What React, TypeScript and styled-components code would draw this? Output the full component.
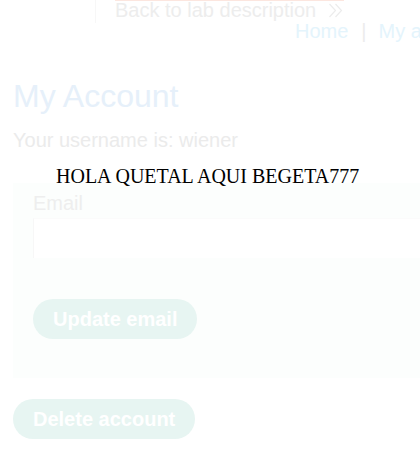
import React from "react";
import styled, { createGlobalStyle } from "styled-components";

const Global = createGlobalStyle`
  html, body { margin: 0; padding: 0; background: #ffffff; }
  body { font-family: "Liberation Sans", Arial, sans-serif; }
`;

const Screen = styled.div`
  position: relative;
  width: 420px;
  height: 454px;
  overflow: hidden;
  background: #ffffff;
`;

const Page = styled.div`
  width: 560px;
  display: flex;
  flex-direction: column;
  font-family: "Liberation Sans", Arial, sans-serif;
`;

const TopBar = styled.div`
  display: flex;
  align-items: flex-start;
  height: 21px;
  padding-left: 95px;
`;

const Divider = styled.div`
  width: 1px;
  height: 23px;
  background: #f7f7f7;
  flex: none;
`;

const BackLink = styled.a`
  margin-left: 19px;
  display: flex;
  align-items: flex-start;
  gap: 12px;
  padding-right: 1px;
  border-top: 1px solid #fce6df;
  font-size: 20px;
  line-height: 18px;
  color: #ededed;
  text-decoration: none;
  white-space: nowrap;
`;

const Chevrons = styled.svg`
  width: 15px;
  height: 15px;
  margin-top: 2px;
  flex: none;
`;

const Nav = styled.nav`
  display: flex;
  padding-left: 295px;
  font-size: 20px;
  line-height: 20px;
  white-space: nowrap;
`;

const NavLink = styled.a`
  color: #e4f4fc;
  text-decoration: none;
`;

const Sep = styled.span`
  color: #ececec;
  margin: 0 12px 0 13px;
`;

const Heading = styled.h1`
  margin: 37px 0 0 13px;
  font-size: 32px;
  line-height: 36px;
  font-weight: 400;
  color: #e6f0fa;
`;

const Username = styled.p`
  margin: 16px 0 0 13px;
  font-size: 20px;
  line-height: 20px;
  color: #ebebeb;
`;

const Form = styled.form`
  margin: 33px 0 0 13px;
  padding: 10px 20px 39px;
  background: #fcfefd;
  display: flex;
  flex-direction: column;
  align-items: flex-start;
`;

const Label = styled.label`
  font-size: 20px;
  line-height: 20px;
  color: #eeeeee;
`;

const Input = styled.div`
  margin-top: 5px;
  align-self: stretch;
  height: 40px;
  box-sizing: border-box;
  background: #ffffff;
  border-left: 1px solid #f7f7f7;
  border-top: 1px solid #fbfbfb;
`;

const Button = styled.button<{ $mt: number }>`
  margin-top: ${(p) => p.$mt}px;
  height: 40px;
  padding: 0 20px;
  border: none;
  border-radius: 20px;
  background: #e7f5f2;
  color: #ffffff;
  font-family: "Liberation Sans", Arial, sans-serif;
  font-weight: 700;
  font-size: 20px;
  line-height: 40px;
  white-space: nowrap;
`;

const Outer = styled.div`
  padding-left: 13px;
  display: flex;
`;

const Overlay = styled.div`
  position: absolute;
  left: 56px;
  top: 166px;
  font-family: "Liberation Serif", "Times New Roman", serif;
  font-size: 20px;
  line-height: 20px;
  color: #000000;
  white-space: nowrap;
`;

export default function App() {
  return (
    <>
      <Global />
      <Screen>
        <Page>
          <TopBar>
            <Divider />
            <BackLink>
              Back to lab description
              <Chevrons viewBox="0 0 15 15" fill="none" stroke="#ececec" strokeWidth="1.2">
                <polyline points="1.5,1 7.5,7.5 1.5,14" />
                <polyline points="7.5,1 13.5,7.5 7.5,14" />
              </Chevrons>
            </BackLink>
          </TopBar>
          <Nav>
            <NavLink>Home</NavLink>
            <Sep>|</Sep>
            <NavLink>My account</NavLink>
          </Nav>
          <Heading>My Account</Heading>
          <Username>Your username is: wiener</Username>
          <Form>
            <Label>Email</Label>
            <Input />
            <Button $mt={41} type="button">Update email</Button>
          </Form>
          <Outer>
            <Button $mt={21} type="button">Delete account</Button>
          </Outer>
        </Page>
        <Overlay>HOLA QUETAL AQUI BEGETA777</Overlay>
      </Screen>
    </>
  );
}
